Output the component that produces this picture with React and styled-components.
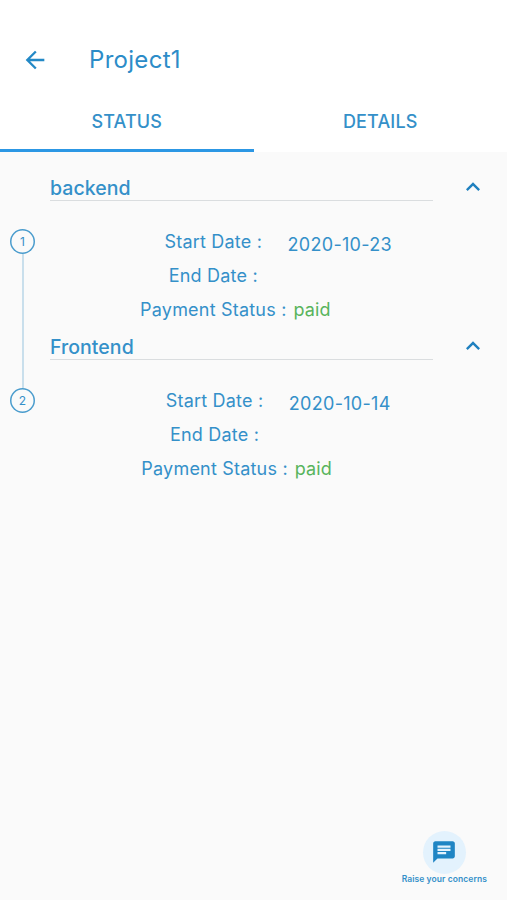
import { useState } from "react";
import styled, { createGlobalStyle } from "styled-components";
import { MdArrowBack, MdChat, MdExpandLess, MdExpandMore } from "react-icons/md";

const GlobalStyle = createGlobalStyle`
  * {
    box-sizing: border-box;
  }
  body {
    margin: 0;
    background-color: #fafafa;
    font-family: Inter, Roboto, sans-serif;
    color: #3490c9;
  }
  button {
    padding: 0;
    border: none;
    background: none;
    font: inherit;
    color: inherit;
    cursor: pointer;
  }
`;

const steps = [
  { name: "backend", start: "2020-10-23", end: "", payment: "paid" },
  { name: "Frontend", start: "2020-10-14", end: "", payment: "paid" },
];

function Step({ number, step, last }) {
  const [open, setOpen] = useState(true);

  return (
    <StepRow>
      <Rail>
        <Connector $hidden={number === 1} $top />
        <StepNumber>{number}</StepNumber>
        <Connector $hidden={last} />
      </Rail>
      <StepBody>
        <StepHeader>
          <StepName>{step.name}</StepName>
          <Toggle onClick={() => setOpen(!open)}>
            {open ? <MdExpandLess /> : <MdExpandMore />}
          </Toggle>
        </StepHeader>
        {open && (
          <Fields>
            <Labels>
              <span>Start Date :</span>
              <span>End Date :</span>
              <span>Payment Status :</span>
            </Labels>
            <Values>
              <DateValue>{step.start}</DateValue>
              <DateValue>{step.end}</DateValue>
              <Payment>{step.payment}</Payment>
            </Values>
          </Fields>
        )}
      </StepBody>
    </StepRow>
  );
}

export default function App() {
  const [tab, setTab] = useState("STATUS");

  return (
    <Screen>
      <GlobalStyle />
      <Header>
        <TitleBar>
          <BackButton>
            <MdArrowBack />
          </BackButton>
          <Title>Project1</Title>
        </TitleBar>
        <Tabs>
          {["STATUS", "DETAILS"].map((name) => (
            <Tab key={name} $active={tab === name} onClick={() => setTab(name)}>
              {name}
            </Tab>
          ))}
        </Tabs>
      </Header>
      <Content>
        {steps.map((step, i) => (
          <Step key={step.name} number={i + 1} step={step} last={i === steps.length - 1} />
        ))}
      </Content>
      <Footer>
        <ChatButton>
          <ChatCircle>
            <MdChat />
          </ChatCircle>
          <ChatText>Raise your concerns</ChatText>
        </ChatButton>
      </Footer>
    </Screen>
  );
}

const Screen = styled.div`
  display: flex;
  flex-direction: column;
  width: 100%;
  height: 100vh;
`;

const Header = styled.header`
  background-color: #fff;
`;

const TitleBar = styled.div`
  display: flex;
  align-items: center;
  height: 92px;
  padding: 28px 21px 0;
`;

const BackButton = styled.button`
  display: flex;
  font-size: 28px;
  color: #2389c6;
`;

const Title = styled.h1`
  margin: 0 0 0 40px;
  font-size: 24px;
  font-weight: 400;
  line-height: 30px;
  letter-spacing: 0.3px;
  color: #2c8cc8;
`;

const Tabs = styled.nav`
  display: flex;
  height: 60px;
`;

const Tab = styled.button`
  flex: 1;
  padding-top: 2px;
  border-bottom: 3px solid ${({ $active }) => ($active ? "#2c97e4" : "transparent")};
  font-size: 18px;
  font-weight: 500;
  letter-spacing: 0.15px;
`;

const Content = styled.main`
  flex: 1;
  padding-top: 10px;
`;

const StepRow = styled.section`
  display: flex;
  height: 159px;
`;

const Rail = styled.div`
  display: flex;
  flex-direction: column;
  align-items: center;
  width: 25px;
  margin-left: 10px;
`;

const Connector = styled.div`
  flex: ${({ $top }) => ($top ? "0 0 67px" : "1")};
  width: 2px;
  background-color: ${({ $hidden }) => ($hidden ? "transparent" : "#c9dfec")};
`;

const StepNumber = styled.div`
  display: flex;
  flex: none;
  align-items: center;
  justify-content: center;
  width: 25px;
  height: 25px;
  border-radius: 50%;
  box-shadow: inset 0 0 0 1.5px #4a9ccd;
  font-size: 12px;
`;

const StepBody = styled.div`
  flex: 1;
  margin-left: 15px;
`;

const StepHeader = styled.div`
  display: flex;
  align-items: flex-end;
  height: 39px;
`;

const StepName = styled.h2`
  width: 383px;
  margin: 0;
  border-bottom: 1px solid #dadddf;
  font-size: 19.5px;
  font-weight: 500;
  line-height: 24px;
  letter-spacing: 0.05px;
`;

const Toggle = styled.button`
  display: flex;
  margin: 0 0 0 26px;
  font-size: 28px;
  color: #1f80bf;
`;

const Fields = styled.div`
  display: flex;
  justify-content: center;
  width: 432px;
  padding-top: 24px;
  font-size: 18px;
  line-height: 34.2px;
  letter-spacing: 0.2px;
`;

const Labels = styled.div`
  display: flex;
  flex-direction: column;
  align-items: center;
`;

const Values = styled.div`
  display: flex;
  flex-direction: column;
`;

const DateValue = styled.span`
  height: 34.2px;
  padding-top: 3px;
  padding-left: 1px;
  letter-spacing: 0.3px;
`;

const Payment = styled.span`
  padding-left: 7px;
  letter-spacing: 0.1px;
  color: #58b45c;
`;

const Footer = styled.footer`
  display: flex;
  justify-content: flex-end;
  padding: 0 20px 15px 0;
`;

const ChatButton = styled.button`
  display: flex;
  flex-direction: column;
  align-items: center;
`;

const ChatCircle = styled.span`
  display: flex;
  align-items: center;
  justify-content: center;
  width: 43px;
  height: 43px;
  padding-bottom: 1px;
  border-radius: 50%;
  background-color: #e3f2fd;
  font-size: 26px;
  color: #1f85c4;
`;

const ChatText = styled.span`
  font-size: 8.5px;
  font-weight: 600;
  line-height: 11px;
  letter-spacing: 0.08px;
`;
